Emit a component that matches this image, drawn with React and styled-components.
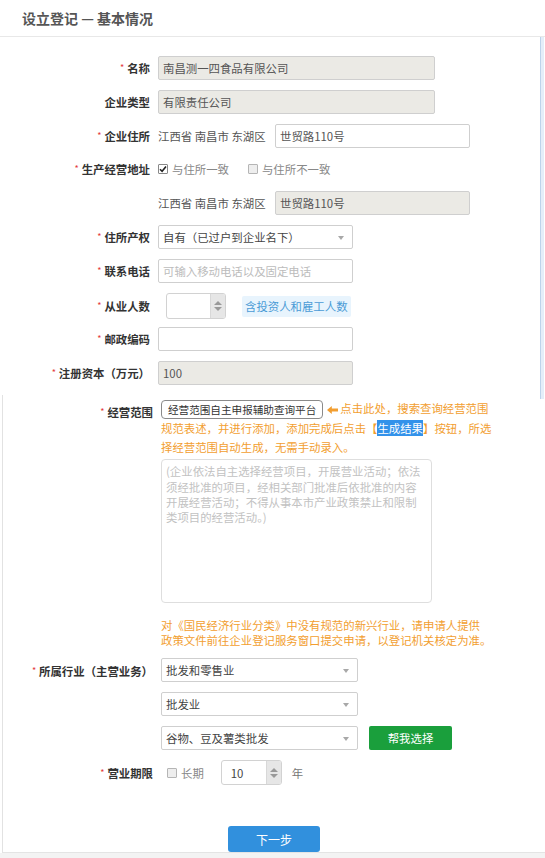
import React from 'react';
import styled, { createGlobalStyle } from 'styled-components';

const GlobalStyle = createGlobalStyle`
  html, body { margin: 0; padding: 0; }
  body {
    background: #f3f3f3;
    font-family: "Noto Sans CJK SC", "Noto Sans", sans-serif;
    font-size: 11.4px;
    color: #333;
  }
  * { box-sizing: border-box; }
`;

const Page = styled.div`
  position: relative;
  width: 545px;
  background: #fff;
`;

const Header = styled.header`
  height: 37px;
  border-bottom: 1px solid #e8e8e8;
  display: flex;
  align-items: center;
  padding-left: 22px;
`;

const Title = styled.h1`
  margin: 0;
  font-size: 14px;
  font-weight: 700;
  color: #555;
`;

const ScrollThumb = styled.div`
  position: absolute;
  right: 1px;
  top: 37px;
  width: 4px;
  height: 362px;
  background: #e4eef9;
  border-left: 1px solid #bdd3ea;
`;

const TopForm = styled.div`
  padding-top: 19px;
`;

const Row = styled.div`
  display: flex;
  align-items: ${p => p.$align || 'center'};
  min-height: ${p => p.$h || 24}px;
  margin-bottom: ${p => (p.$mb ?? 10)}px;
`;

const Label = styled.label`
  flex: none;
  width: 158px;
  padding-right: 8px;
  padding-top: ${p => p.$pt || 0}px;
  text-align: right;
  font-weight: 700;
  font-size: 11.4px;
  color: #333;
  white-space: nowrap;
`;

const Star = styled.span`
  color: #e4393c;
  font-size: 9px;
  font-weight: 400;
  margin-right: 3px;
  vertical-align: 2px;
`;

const TextInput = styled.input`
  width: ${p => p.$w}px;
  height: 24px;
  border: 1px solid #cfcfcf;
  border-radius: 2px;
  padding: 0 4px;
  font: inherit;
  font-size: 11.4px;
  color: #555;
  background: ${p => (p.$muted ? '#ebeae5' : '#fff')};
  outline: none;
  &::placeholder { color: #bcbcbc; }
`;

const AddrText = styled.span`
  flex: none;
  width: 117px;
  color: #555;
  font-size: 11.4px;
`;

const CheckGroup = styled.div`
  display: flex;
  align-items: center;
  margin-left: ${p => p.$ml || 0}px;
`;

const CheckOption = styled.span`
  display: inline-flex;
  align-items: center;
  gap: 4px;
  color: #888;
  font-size: 11.4px;
  margin-right: ${p => p.$mr || 0}px;
`;

const Box = styled.span`
  width: 10px;
  height: 10px;
  border: 1px solid ${p => (p.$checked ? '#888' : '#b5b5b5')};
  border-radius: 1px;
  background: ${p => (p.$checked ? '#fff' : '#eee')};
  display: inline-flex;
  align-items: center;
  justify-content: center;
`;

const SelectBox = styled.div`
  position: relative;
  width: ${p => p.$w}px;
  height: 24px;
  border: 1px solid #cfcfcf;
  border-radius: 2px;
  padding: 0 4px;
  display: flex;
  align-items: center;
  font-size: 11.4px;
  color: #444;
  background: #fff;
`;

const Caret = styled.span`
  position: absolute;
  right: 8px;
  top: 10px;
  width: 0;
  height: 0;
  border-left: 3px solid transparent;
  border-right: 3px solid transparent;
  border-top: 4px solid #a8a8a8;
`;

const Spinner = styled.div`
  display: flex;
  width: ${p => p.$w}px;
  height: ${p => p.$h}px;
  margin-left: ${p => p.$ml || 0}px;
  border: 1px solid #d2d2d2;
  border-radius: 3px;
  overflow: hidden;
  background: #fff;
`;

const SpinValue = styled.div`
  flex: 1;
  display: flex;
  align-items: center;
  padding-left: 9px;
  font-size: 11.4px;
  color: #444;
`;

const SpinButtons = styled.div`
  width: 15px;
  background: #e6e6e6;
  border-left: 1px solid #d8d8d8;
  display: flex;
  flex-direction: column;
  align-items: center;
  justify-content: center;
  gap: 2px;
`;

const Tri = styled.span`
  width: 0;
  height: 0;
  border-left: 4px solid transparent;
  border-right: 4px solid transparent;
  ${p => (p.$up
    ? `border-bottom: 4px solid ${p.$c || '#999'};`
    : `border-top: 4px solid ${p.$c || '#999'};`)}
`;

const Tag = styled.span`
  margin-left: 16px;
  height: 21px;
  line-height: 21px;
  padding: 0 3px;
  background: #e8f4fd;
  color: #4a9bd6;
  font-size: 11.4px;
  border-radius: 2px;
`;

const Lower = styled.div`
  margin-left: 2px;
  border-left: 1px solid #e2e2e2;
  border-bottom: 1px solid #e4e4e4;
  padding-top: 4px;
`;

const ScopeBody = styled.div`
  width: 340px;
  display: flex;
  flex-direction: column;
`;

const Orange = styled.div`
  color: #f29e30;
  font-size: 11.4px;
  line-height: ${p => p.$lh || 19}px;
  white-space: nowrap;
  margin-top: ${p => p.$mt || 0}px;
`;

const ScopeButton = styled.span`
  display: inline-block;
  height: 19px;
  line-height: 17px;
  padding: 0 6px;
  border: 1px solid #8a8a8a;
  border-radius: 4px;
  color: #333;
  font-size: 10.6px;
  vertical-align: middle;
  margin-right: 4px;
  background: #fff;
`;

const ArrowIcon = styled.svg`
  width: 11px;
  height: 8px;
  vertical-align: middle;
  margin-right: 2px;
`;

const Selected = styled.span`
  background: #3392ea;
  color: #fff;
`;

const TextArea = styled.div`
  margin-top: 2px;
  width: 271px;
  height: 144px;
  border: 1px solid #dedede;
  border-radius: 4px;
  padding: 4px 4px;
  color: #c2c2c2;
  font-size: 11.4px;
  line-height: 15.3px;
  white-space: nowrap;
`;

const SelectStack = styled.div`
  display: flex;
  flex-direction: column;
  gap: 10px;
`;

const SelectLine = styled.div`
  display: flex;
  align-items: center;
`;

const GreenButton = styled.button`
  margin-left: 11px;
  width: 83px;
  height: 24px;
  border: none;
  border-radius: 2px;
  background: #1a9f3c;
  color: #fff;
  font: inherit;
  font-size: 11.4px;
`;

const Unit = styled.span`
  margin-left: 10px;
  color: #777;
  font-size: 11.4px;
`;

const ActionBar = styled.div`
  padding-left: 225px;
  padding-top: 41px;
`;

const PrimaryButton = styled.button`
  display: block;
  width: 92px;
  height: 26px;
  border: none;
  border-radius: 3px;
  background: #3190dd;
  color: #fff;
  font: inherit;
  font-size: 12px;
`;

const CheckMark = () => (
  <svg width="8" height="8" viewBox="0 0 8 8">
    <path d="M1 4.2 L3.1 6.3 L7 1.5" fill="none" stroke="#222" strokeWidth="1.6" />
  </svg>
);

const Check = ({ checked, children, mr }) => (
  <CheckOption $mr={mr}>
    <Box $checked={checked}>{checked && <CheckMark />}</Box>
    {children}
  </CheckOption>
);

const Select = ({ w, children }) => (
  <SelectBox $w={w}>
    {children}
    <Caret />
  </SelectBox>
);

const NumberSpin = ({ w, h, ml, value }) => (
  <Spinner $w={w} $h={h} $ml={ml}>
    <SpinValue>{value}</SpinValue>
    <SpinButtons>
      <Tri $up />
      <Tri />
    </SpinButtons>
  </Spinner>
);

const Req = ({ children, pt }) => (
  <Label $pt={pt}>
    <Star>*</Star>
    {children}
  </Label>
);

export default function App() {
  return (
    <>
      <GlobalStyle />
      <Page>
        <Header>
          <Title>设立登记 — 基本情况</Title>
        </Header>
        <ScrollThumb />
        <TopForm>
          <Row>
            <Req>名称</Req>
            <TextInput $w={277} $muted readOnly value="南昌测一四食品有限公司" />
          </Row>
          <Row>
            <Label>企业类型</Label>
            <TextInput $w={277} $muted readOnly value="有限责任公司" />
          </Row>
          <Row>
            <Req>企业住所</Req>
            <AddrText>江西省 南昌市 东湖区</AddrText>
            <TextInput $w={195} readOnly value="世贸路110号" />
          </Row>
          <Row $h={22} $mb={11}>
            <Req>生产经营地址</Req>
            <CheckGroup>
              <Check checked mr={19}>与住所一致</Check>
              <Check>与住所不一致</Check>
            </CheckGroup>
          </Row>
          <Row>
            <Label />
            <AddrText>江西省 南昌市 东湖区</AddrText>
            <TextInput $w={195} $muted readOnly value="世贸路110号" />
          </Row>
          <Row>
            <Req>住所产权</Req>
            <Select w={195}>自有（已过户到企业名下）</Select>
          </Row>
          <Row>
            <Req>联系电话</Req>
            <TextInput $w={195} placeholder="可输入移动电话以及固定电话" />
          </Row>
          <Row $h={26} $mb={8}>
            <Req>从业人数</Req>
            <NumberSpin w={60} h={26} ml={8} value="" />
            <Tag>含投资人和雇工人数</Tag>
          </Row>
          <Row>
            <Req>邮政编码</Req>
            <TextInput $w={195} />
          </Row>
          <Row>
            <Req>注册资本（万元）</Req>
            <TextInput $w={195} $muted readOnly value="100" />
          </Row>
        </TopForm>
        <Lower>
          <Row $align="flex-start" $mb={11}>
            <Req pt={5}>经营范围</Req>
            <ScopeBody>
              <Orange>
                <ScopeButton>经营范围自主申报辅助查询平台</ScopeButton>
                <ArrowIcon viewBox="0 0 11 8">
                  <path d="M0 4 L4.8 0 L4.8 2.4 L11 2.4 L11 5.6 L4.8 5.6 L4.8 8 Z" fill="#f29e30" />
                </ArrowIcon>
                点击此处，搜索查询经营范围
                <br />
                规范表述，并进行添加，添加完成后点击【<Selected>生成结果</Selected>】按钮，所选
                <br />
                择经营范围自动生成，无需手动录入。
              </Orange>
              <TextArea>
                (企业依法自主选择经营项目，开展营业活动；依法
                <br />
                须经批准的项目，经相关部门批准后依批准的内容
                <br />
                开展经营活动；不得从事本市产业政策禁止和限制
                <br />
                类项目的经营活动。)
              </TextArea>
              <Orange $lh={14.5} $mt={15}>
                对《国民经济行业分类》中没有规范的新兴行业，请申请人提供
                <br />
                政策文件前往企业登记服务窗口提交申请，以登记机关核定为准。
              </Orange>
            </ScopeBody>
          </Row>
          <Row $align="flex-start">
            <Req pt={5}>所属行业（主营业务）</Req>
            <SelectStack>
              <Select w={197}>批发和零售业</Select>
              <Select w={197}>批发业</Select>
              <SelectLine>
                <Select w={197}>谷物、豆及薯类批发</Select>
                <GreenButton>帮我选择</GreenButton>
              </SelectLine>
            </SelectStack>
          </Row>
          <Row $h={25} $mb={0}>
            <Req>营业期限</Req>
            <CheckGroup $ml={6}>
              <Check>长期</Check>
            </CheckGroup>
            <NumberSpin w={61} h={25} ml={17} value="10" />
            <Unit>年</Unit>
          </Row>
          <ActionBar>
            <PrimaryButton>下一步</PrimaryButton>
          </ActionBar>
        </Lower>
      </Page>
    </>
  );
}
